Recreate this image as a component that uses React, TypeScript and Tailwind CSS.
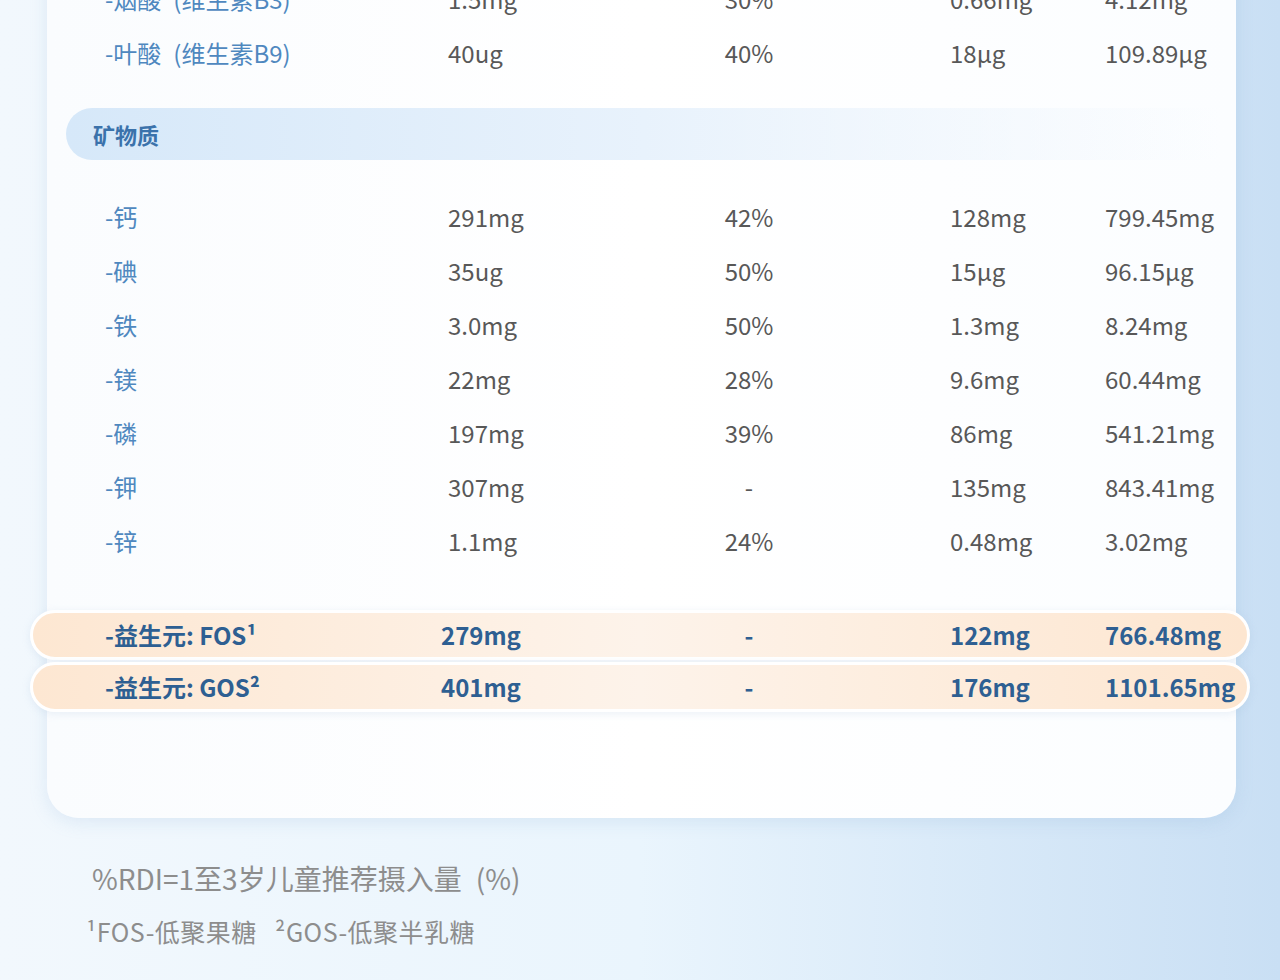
const font = { fontFamily: '"Noto Sans CJK SC", "Noto Sans", sans-serif' };

type Row = [string, string, string, string, string];

const topRows: Row[] = [
  ["-烟酸\u2002(维生素B3)", "1.5mg", "30%", "0.66mg", "4.12mg"],
  ["-叶酸\u2002(维生素B9)", "40ug", "40%", "18μg", "109.89μg"],
];

const minerals: Row[] = [
  ["-钙", "291mg", "42%", "128mg", "799.45mg"],
  ["-碘", "35ug", "50%", "15μg", "96.15μg"],
  ["-铁", "3.0mg", "50%", "1.3mg", "8.24mg"],
  ["-镁", "22mg", "28%", "9.6mg", "60.44mg"],
  ["-磷", "197mg", "39%", "86mg", "541.21mg"],
  ["-钾", "307mg", "-", "135mg", "843.41mg"],
  ["-锌", "1.1mg", "24%", "0.48mg", "3.02mg"],
];

const prebiotics: Row[] = [
  ["-益生元: FOS¹", "279mg", "-", "122mg", "766.48mg"],
  ["-益生元: GOS²", "401mg", "-", "176mg", "1101.65mg"],
];

const NutrientRow = ({ row }: { row: Row }) => {
  return (
    <div className="h-[54px] pl-[58px] grid grid-cols-[343px_275px_227px_155px_1fr] items-center text-[24px]">
      <span className="text-[#4f88bf] whitespace-nowrap">{row[0]}</span>
      <span className="text-[#585858]">{row[1]}</span>
      <span className="text-[#585858] w-[52px] text-center">{row[2]}</span>
      <span className="text-[#585858]">{row[3]}</span>
      <span className="text-[#585858]">{row[4]}</span>
    </div>
  );
};

const PrebioticRow = ({ row }: { row: Row }) => {
  return (
    <div className="h-[50px] -ml-[17px] w-[1220px] rounded-full border-[3px] border-white bg-gradient-to-r from-[#fde7d2] via-[#fdf3ea] to-[#fde6d0] shadow-[0_2px_8px_rgba(150,180,210,0.18)] pl-[72px] grid grid-cols-[336px_282px_227px_155px_1fr] items-center text-[24px] font-bold text-[#2e5f92]">
      <span className="whitespace-nowrap">{row[0]}</span>
      <span>{row[1]}</span>
      <span className="w-[52px] text-center">{row[2]}</span>
      <span>{row[3]}</span>
      <span>{row[4]}</span>
    </div>
  );
};

export default function App() {
  return (
    <div
      className="w-[1280px] h-[980px] overflow-hidden bg-gradient-to-r from-[#f2f8fd] via-[#eaf5fd] to-[#c9dff4]"
      style={font}
    >
      <div className="ml-[47px] w-[1189px] -mt-[28px] pb-[106px] bg-gradient-to-r from-[#fafcfe] via-white to-[#fbfdff] rounded-b-[32px] shadow-[0_4px_18px_rgba(120,165,210,0.18)]">
        {topRows.map((r) => (
          <NutrientRow key={r[0]} row={r} />
        ))}

        <div className="mt-[28px] ml-[19px] mr-[16px] h-[52px] rounded-l-full bg-gradient-to-r from-[#d6e8f9] via-[#e8f2fc] to-white/0 flex items-center pl-[27px]">
          <span className="text-[22px] font-bold text-[#3b72ab]">矿物质</span>
        </div>

        <div className="mt-[30px]">
          {minerals.map((r) => (
            <NutrientRow key={r[0]} row={r} />
          ))}
        </div>

        <div className="mt-[42px] flex flex-col gap-[2px]">
          {prebiotics.map((r) => (
            <PrebioticRow key={r[0]} row={r} />
          ))}
        </div>
      </div>

      <div className="mt-[42px] pl-[92px] text-[28px] leading-[36px] text-[#8d8d8d]">
        %RDI=1至3岁儿童推荐摄入量{"\u2002"}(%)
      </div>
      <div className="mt-[20px] pl-[86px] text-[25px] leading-[30px] text-[#8d8d8d] tracking-[0.5px]">
        ¹FOS-低聚果糖&nbsp;&nbsp;&nbsp;²GOS-低聚半乳糖
      </div>
    </div>
  );
}
